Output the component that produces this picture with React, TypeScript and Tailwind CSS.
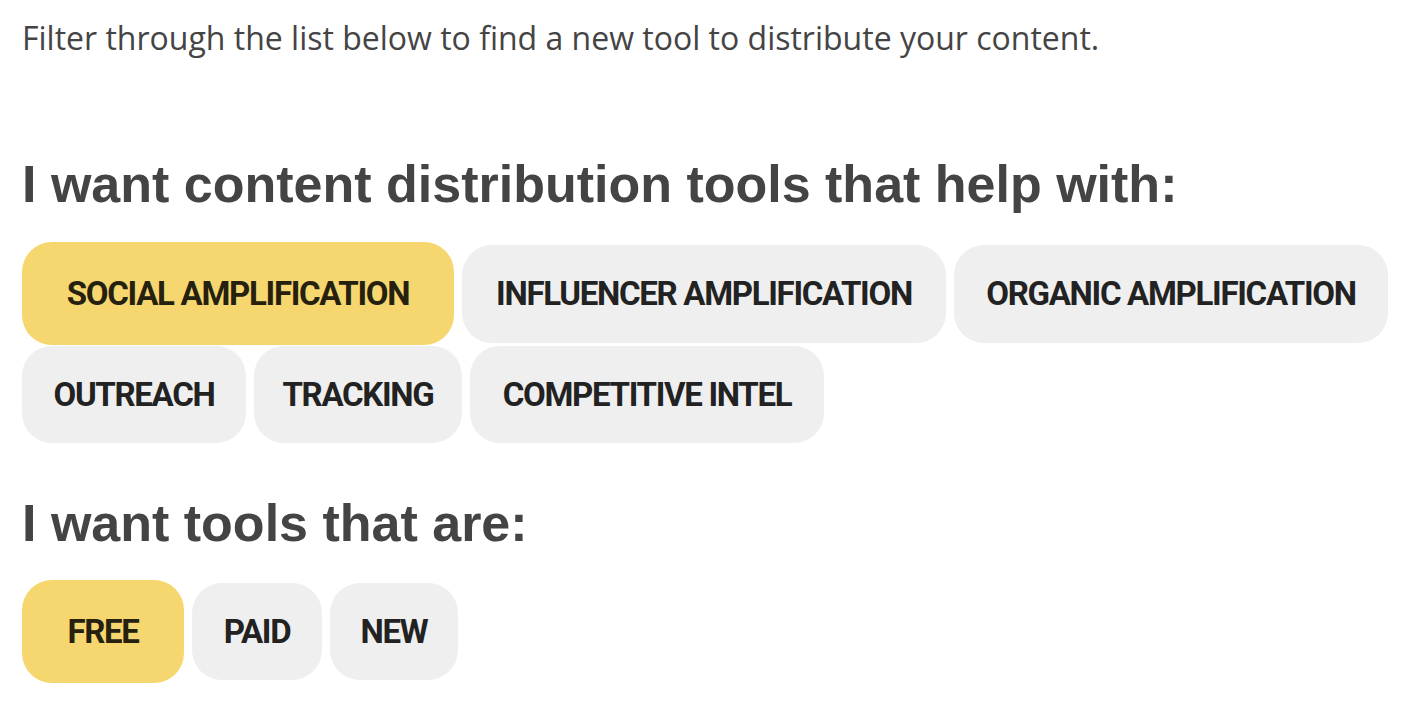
import React from "react";

type ChipProps = { label: string; active?: boolean; size: string };

const Chip = ({ label, active, size }: ChipProps) => (
  <button
    className={
      (active ? "bg-[#f6d76f] text-[#26210f] " : "bg-[#efefef] text-[#222222] ") +
      size +
      " flex items-center justify-center rounded-[30px] font-['Roboto',sans-serif] text-[33px] font-bold leading-none tracking-[-1.3px] uppercase"
    }
  >
    {label}
  </button>
);

export default function App() {
  return (
    <div className="w-[1408px] h-[704px] bg-white pl-[22px] pr-[12px] overflow-hidden">
      <p className="pt-[14px] font-['Open_Sans',sans-serif] text-[32px] leading-[48px] text-[#444444]">
        Filter through the list below to find a new tool to distribute your content.
      </p>
      <h2 className="mt-[91px] font-['Liberation_Sans',Arial,sans-serif] text-[52px] leading-[62px] font-bold text-[#444444]">
        I want content distribution tools that help with:
      </h2>
      <div className="mt-[27px] flex flex-wrap items-center gap-x-[8px] gap-y-[1px]">
        <Chip label="Social Amplification" active size="w-[432px] h-[103px]" />
        <Chip label="Influencer Amplification" size="w-[484px] h-[98px]" />
        <Chip label="Organic Amplification" size="w-[434px] h-[98px]" />
        <Chip label="Outreach" size="w-[224px] h-[97px]" />
        <Chip label="Tracking" size="w-[208px] h-[97px]" />
        <Chip label="Competitive Intel" size="w-[354px] h-[97px]" />
      </div>
      <h2 className="mt-[49px] font-['Liberation_Sans',Arial,sans-serif] text-[52px] leading-[62px] font-bold text-[#444444]">
        I want tools that are:
      </h2>
      <div className="mt-[26px] flex flex-wrap items-center gap-x-[8px] gap-y-[1px]">
        <Chip label="Free" active size="w-[162px] h-[103px]" />
        <Chip label="Paid" size="w-[130px] h-[97px]" />
        <Chip label="New" size="w-[128px] h-[97px]" />
      </div>
    </div>
  );
}
